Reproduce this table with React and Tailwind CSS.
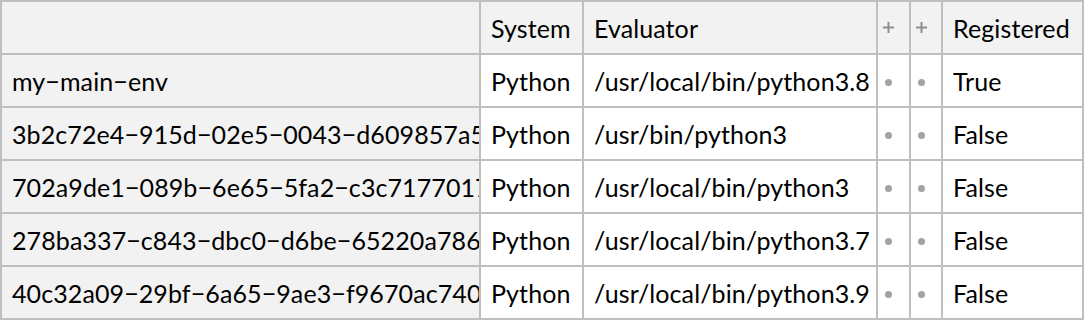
const rows = [
  ["my−main−env", "Python", "/usr/local/bin/python3.8", "True"],
  ["3b2c72e4−915d−02e5−0043−d609857a5c2f", "Python", "/usr/bin/python3", "False"],
  ["702a9de1−089b−6e65−5fa2−c3c717701761", "Python", "/usr/local/bin/python3", "False"],
  ["278ba337−c843−dbc0−d6be−65220a786e1d", "Python", "/usr/local/bin/python3.7", "False"],
  ["40c32a09−29bf−6a65−9ae3−f9670ac740b6", "Python", "/usr/local/bin/python3.9", "False"],
];

const Cell = ({ children, head }) => (
  <div
    className={`h-[51px] flex items-center pl-[10px] pt-[1px] overflow-hidden whitespace-nowrap ${
      head ? "bg-[#f2f2f2]" : "bg-white"
    }`}
  >
    {children}
  </div>
);

// the little "+" in the narrow header cells
const Plus = () => (
  <div className="h-[51px] bg-[#f2f2f2] flex items-center pl-[4px] pb-[1px]">
    <svg width="13" height="13" viewBox="0 0 13 13">
      <path d="M6.5 1v11M1 6.5h11" stroke="#8f8f8f" strokeWidth="2" />
    </svg>
  </div>
);

const Dot = () => (
  <div className="h-[51px] bg-white flex items-center pl-[7px] pt-[3px]">
    <div className="w-[7px] h-[7px] rounded-full bg-[#a3a3a3]" />
  </div>
);

export default function App() {
  return (
    <div className="bg-white w-[1087px] h-[323px]">
      <div
        className="w-[1084px] bg-[#bfbfbf] p-[2px] grid gap-[2px] grid-cols-[477px_101px_292px_31px_30px_139px] text-[25px] leading-[30px] text-black tracking-[0.1px]"
        style={{ fontFamily: "Lato, 'Open Sans', sans-serif" }}
      >
        <Cell head />
        <Cell head>System</Cell>
        <Cell head>Evaluator</Cell>
        <Plus />
        <Plus />
        <Cell head>Registered</Cell>
        {rows.map((r, i) => (
          <div key={i} className="contents">
            <Cell head>{r[0]}</Cell>
            <Cell>{r[1]}</Cell>
            <Cell>{r[2]}</Cell>
            <Dot />
            <Dot />
            <Cell>{r[3]}</Cell>
          </div>
        ))}
      </div>
    </div>
  );
}
